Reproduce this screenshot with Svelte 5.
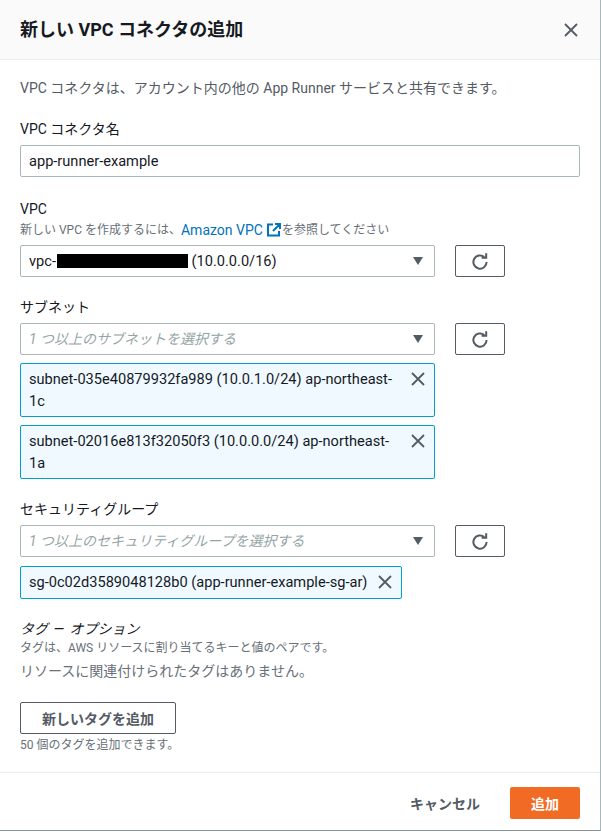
{#snippet refresh()}
  <button class="refresh" aria-label="refresh">
    <svg width="18" height="18" viewBox="0 0 18 18" fill="none" stroke="#545b64" stroke-width="2">
      <path d="M15.6 10a6.6 6.6 0 1 1-2.3-5" />
      <path d="M15.2 1.2v4.6h-4.6" />
    </svg>
  </button>
{/snippet}

{#snippet caret()}
  <svg class="caret" width="10" height="8" viewBox="0 0 10 8"><path d="M0 0h10L5 8z" fill="#545b64" /></svg>
{/snippet}

{#snippet xicon()}
  <svg class="x" width="16" height="16" viewBox="0 0 16 16" fill="none" stroke="#545b64" stroke-width="1.8"><path d="M2 2l12 12M14 2L2 14" /></svg>
{/snippet}

<div class="modal">
  <header class="head">
    <h1>新しい VPC コネクタの追加</h1>
    <svg class="close" width="16" height="16" viewBox="0 0 16 16" fill="none" stroke="#545b64" stroke-width="1.8"><path d="M2 2l12 12M14 2L2 14" /></svg>
  </header>

  <main class="body">
    <p class="intro">VPC コネクタは、アカウント内の他の App Runner サービスと共有できます。</p>

    <section class="name">
      <div class="label">VPC コネクタ名</div>
      <div class="input">app-runner-example</div>
    </section>

    <section class="vpc">
      <div class="label">VPC</div>
      <div class="desc">新しい VPC を作成するには、<span class="link">Amazon VPC</span>
        <svg class="ext" width="14" height="14" viewBox="0 0 14 14" fill="none" stroke="#0073bb" stroke-width="2"><path d="M6 1.5H1v11h11V8M8 1h5v5M13 1L6 8" /></svg>を参照してください</div>
      <div class="row">
        <div class="select val"><span>vpc-<i class="redact"></i> (10.0.0.0/16)</span>{@render caret()}</div>
        {@render refresh()}
      </div>
    </section>

    <section class="subnet">
      <div class="label">サブネット</div>
      <div class="row">
        <div class="select ph"><span>1 つ以上のサブネットを選択する</span>{@render caret()}</div>
        {@render refresh()}
      </div>
      <div class="token wide"><span>subnet-035e40879932fa989 (10.0.1.0/24) ap-northeast-1c</span>{@render xicon()}</div>
      <div class="token wide"><span>subnet-02016e813f32050f3 (10.0.0.0/24) ap-northeast-1a</span>{@render xicon()}</div>
    </section>

    <section class="sg">
      <div class="label">セキュリティグループ</div>
      <div class="row">
        <div class="select ph"><span>1 つ以上のセキュリティグループを選択する</span>{@render caret()}</div>
        {@render refresh()}
      </div>
      <div class="token narrow"><span>sg-0c02d3589048128b0 (app-runner-example-sg-ar)</span>{@render xicon()}</div>
    </section>

    <section class="tags">
      <div class="label"><span class="it">タグ — オプション</span></div>
      <div class="desc">タグは、AWS リソースに割り当てるキーと値のペアです。</div>
      <p class="none">リソースに関連付けられたタグはありません。</p>
      <button class="add">新しいタグを追加</button>
      <div class="desc note">50 個のタグを追加できます。</div>
    </section>
  </main>

  <footer class="foot">
    <span class="cancel">キャンセル</span>
    <button class="primary">追加</button>
  </footer>
</div>

<style>
  :global(body) { margin: 0; background: #fff; }
  .modal {
    width: 601px; height: 831px; box-sizing: border-box;
    border-right: 1px solid #aab7b8; border-bottom: 1px solid #879596;
    display: flex; flex-direction: column;
    font-family: Roboto, "Noto Sans CJK JP", sans-serif;
    font-size: 14px; color: #16191f; background: #fff;
    overflow: hidden;
  }
  .head {
    height: 60px; box-sizing: border-box; flex: none;
    display: flex; align-items: center; justify-content: space-between;
    padding: 0 21px 0 20px; background: #fafafa; border-bottom: 1px solid #eaeded;
  }
  h1 { margin: 0; font-size: 18px; font-weight: 700; line-height: 22px; color: #16191f; }
  .body { flex: 1; padding: 0 20px; }
  .intro { margin: 18px 0 0; line-height: 20px; color: #545b64; }
  .label { line-height: 20px; }
  .desc { font-size: 12px; line-height: 16px; color: #687078; }
  .name { margin-top: 21px; }
  .input {
    margin-top: 6px; height: 32px; box-sizing: border-box;
    border: 1px solid #aab7b8; border-radius: 2px; padding: 0 8px;
    display: flex; align-items: center; color: #16191f; font-size: 14.6px;
  }
  .vpc { margin-top: 22px; }
  .vpc .desc { display: flex; align-items: center; height: 16px; margin-top: 3px; white-space: pre; }
  .link { font-size: 14px; color: #0073bb; margin-right: 4px; }
  .ext { margin-right: 1px; }
  .row { display: flex; gap: 20px; margin-top: 6px; }
  .vpc .row { margin-top: 7px; }
  .select {
    width: 415px; height: 32px; box-sizing: border-box; flex: none;
    border: 1px solid #aab7b8; border-radius: 2px; padding: 0 8px;
    display: flex; align-items: center; justify-content: space-between;
  }
  .val { font-size: 14.6px; }
  .ph span { font-style: italic; color: #95a5a6; position: relative; top: -1px; }
  .redact { display: inline-block; width: 131px; height: 14px; margin-left: 1px; background: #000; vertical-align: -2px; }
  .caret { margin-right: 3px; }
  .refresh {
    width: 50px; height: 32px; padding: 0; background: #fff;
    border: 1px solid #545b64; border-radius: 2px;
    display: flex; align-items: center; justify-content: center;
  }
  .subnet { margin-top: 20px; }
  .token {
    box-sizing: border-box; margin-top: 8px; background: #eff9ff;
    border: 1px solid #00a1c9; border-radius: 2px;
    padding: 4px 8px 3px; line-height: 22px; font-size: 14.6px;
    display: flex; align-items: flex-start; justify-content: space-between; gap: 8px;
    color: #16191f;
  }
  .token .x { flex: none; margin: 3px 0 0; }
  .wide { width: 415px; height: 54px; }
  .narrow { width: 382px; height: 33px; margin-top: 9px; white-space: nowrap; }
  .sg { margin-top: 20px; }
  .tags { margin-top: 20px; }
  .it { font-style: italic; word-spacing: 2px; }
  .tags .desc { margin-top: 1px; }
  .none { margin: 5px 0 0; line-height: 20px; color: #687078; }
  .add {
    display: block; margin-top: 21px; width: 156px; height: 32px; padding: 0;
    background: #fff; border: 1px solid #545b64; border-radius: 2px;
    font: 700 14px Roboto, "Noto Sans CJK JP", sans-serif; color: #545b64;
  }
  .tags .note { margin-top: 3px; }
  .foot {
    flex: none; height: 58px; box-sizing: border-box; border-top: 1px solid #eaeded;
    display: flex; align-items: center; justify-content: flex-end; gap: 30px; padding: 2px 20px 0;
  }
  .cancel { font-weight: 700; color: #545b64; }
  .primary {
    width: 70px; height: 32px; padding: 0; border: none; border-radius: 2px; background: #f26b24; color: #fff;
    font: 700 14px Roboto, "Noto Sans CJK JP", sans-serif;
  }
</style>
